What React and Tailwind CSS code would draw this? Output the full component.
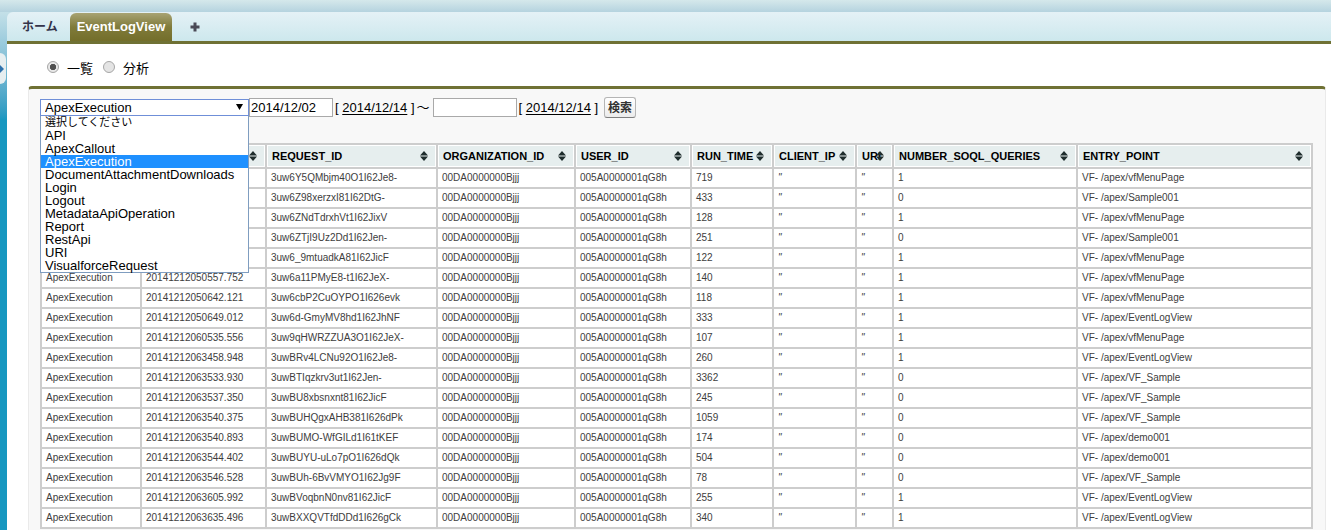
import { useState } from 'react';

const EVENT_TYPES = [
  '選択してください',
  'API',
  'ApexCallout',
  'ApexExecution',
  'DocumentAttachmentDownloads',
  'Login',
  'Logout',
  'MetadataApiOperation',
  'Report',
  'RestApi',
  'URI',
  'VisualforceRequest',
];

const COLUMNS = [
  { name: 'EVENT_TYPE', width: 'w-[98px]' },
  { name: 'TIMESTAMP', width: 'w-[123px]' },
  { name: 'REQUEST_ID', width: 'w-[169px]' },
  { name: 'ORGANIZATION_ID', width: 'w-[136px]' },
  { name: 'USER_ID', width: 'w-[114px]' },
  { name: 'RUN_TIME', width: 'w-[80px]' },
  { name: 'CLIENT_IP', width: 'w-[81px]' },
  { name: 'URI', width: 'w-[35px]' },
  { name: 'NUMBER_SOQL_QUERIES', width: 'w-[182px]' },
  { name: 'ENTRY_POINT', width: '' },
];

// timestamp, request id, run time, soql queries, entry point
const LOGS = [
  ['', '3uw6Y5QMbjm40O1I62Je8-', '719', '1', 'vfMenuPage'],
  ['', '3uw6Z98xerzxI81I62DtG-', '433', '0', 'Sample001'],
  ['', '3uw6ZNdTdrxhVt1I62JixV', '128', '1', 'vfMenuPage'],
  ['', '3uw6ZTjI9Uz2Dd1I62Jen-', '251', '0', 'Sample001'],
  ['', '3uw6_9mtuadkA81I62JicF', '122', '1', 'vfMenuPage'],
  ['20141212050557.752', '3uw6a11PMyE8-t1I62JeX-', '140', '1', 'vfMenuPage'],
  ['20141212050642.121', '3uw6cbP2CuOYPO1I626evk', '118', '1', 'vfMenuPage'],
  ['20141212050649.012', '3uw6d-GmyMV8hd1I62JhNF', '333', '1', 'EventLogView'],
  ['20141212060535.556', '3uw9qHWRZZUA3O1I62JeX-', '107', '1', 'vfMenuPage'],
  ['20141212063458.948', '3uwBRv4LCNu92O1I62Je8-', '260', '1', 'EventLogView'],
  ['20141212063533.930', '3uwBTIqzkrv3ut1I62Jen-', '3362', '0', 'VF_Sample'],
  ['20141212063537.350', '3uwBU8xbsnxnt81I62JicF', '245', '0', 'VF_Sample'],
  ['20141212063540.375', '3uwBUHQgxAHB381I626dPk', '1059', '0', 'VF_Sample'],
  ['20141212063540.893', '3uwBUMO-WfGILd1I61tKEF', '174', '0', 'demo001'],
  ['20141212063544.402', '3uwBUYU-uLo7pO1I626dQk', '504', '0', 'demo001'],
  ['20141212063546.528', '3uwBUh-6BvVMYO1I62Jg9F', '78', '0', 'VF_Sample'],
  ['20141212063605.992', '3uwBVoqbnN0nv81I62JicF', '255', '1', 'EventLogView'],
  ['20141212063635.496', '3uwBXXQVTfdDDd1I626gCk', '340', '1', 'EventLogView'],
];

const SortIcon = () => (
  <svg className="absolute right-[7px] top-1/2 -translate-y-1/2" width="8" height="10" viewBox="0 0 8 10" aria-hidden="true">
    <path d="M4 0 8 4.500H0zM4 10 0 5.500h8z" fill="#1f2d2d" />
  </svg>
);

const TabBar = () => (
  <nav className="flex h-8 items-stretch rounded-tl-md border-b-3 border-[#6f7134] bg-linear-to-b from-[#e4f1f6] to-[#cde8ed] pl-[15px]">
    <a href="#home" className="flex items-center pr-3 text-[12px] font-bold text-[#33334a]">
      ホーム
    </a>
    <a
      href="#log"
      className="mt-px flex items-center rounded-t-md bg-linear-to-b from-[#a8a373] via-[#807b3a] via-50% to-[#736e2a] px-[7px] text-[13px] font-bold text-white"
    >
      EventLogView
    </a>
    <button type="button" aria-label="すべてのタブ" className="ml-[18px] flex items-center">
      <svg width="10" height="10" viewBox="0 0 10 10" aria-hidden="true">
        <path d="M3.5 0.5h3v3h3v3h-3v3h-3v-3h-3v-3h3z" fill="#4a4a56" />
      </svg>
    </button>
  </nav>
);

const ModeRadio = ({ value, mode, onChange }) => (
  <label className="flex items-center gap-2">
    <input
      type="radio"
      name="mode"
      checked={mode === value}
      onChange={() => onChange(value)}
      className="mb-1 size-3 appearance-none rounded-full border border-[#a6a6a6] bg-[#e4e4e4] checked:bg-radial checked:from-[#505050] checked:from-40% checked:to-[#e8e8e8] checked:to-50%"
    />
    {value}
  </label>
);

const DateField = ({ label, value, onChange }) => (
  <>
    <input
      type="text"
      aria-label={label}
      value={value}
      onChange={(e) => onChange(e.target.value)}
      className="h-[19px] w-21 border border-[#a9a9a9] bg-white px-px"
    />
    <span className="whitespace-pre pl-0.5">
      {'[ '}
      <a href="#today" className="underline underline-offset-2" onClick={() => onChange('2014/12/14')}>
        2014/12/14
      </a>
      {' ]'}
    </span>
  </>
);

const SearchBar = () => {
  const [eventType, setEventType] = useState('ApexExecution');
  const [from, setFrom] = useState('2014/12/02');
  const [to, setTo] = useState('');

  return (
    <form className="flex h-[21px] items-center text-[13px] text-black" onSubmit={(e) => e.preventDefault()}>
      <div className="relative w-[209px]">
        <select
          aria-label="イベント種別"
          value={eventType}
          onChange={(e) => setEventType(e.target.value)}
          className="block h-[17px] w-full appearance-none border border-[#6f8fd8] bg-white px-1 leading-[15px]"
        >
          {EVENT_TYPES.map((type) => (
            <option key={type}>{type}</option>
          ))}
        </select>
        <svg className="absolute right-1.5 top-[5px]" width="7" height="6" viewBox="0 0 7 6" aria-hidden="true">
          <path d="M0 0h7L3.500 6z" fill="#000" />
        </svg>
        <ul role="listbox" className="absolute left-0 top-full z-10 w-full border border-t-0 border-[#7f9dc0] bg-white">
          {EVENT_TYPES.map((type) => (
            <li
              key={type}
              role="option"
              aria-selected={type === eventType}
              onClick={() => setEventType(type)}
              className="h-[13px] px-1 leading-[13px] whitespace-nowrap first:text-[11px] aria-selected:bg-[#1e90ff] aria-selected:text-white"
            >
              {type}
            </li>
          ))}
        </ul>
      </div>
      <DateField label="開始日" value={from} onChange={setFrom} />
      <span className="mr-[3px] ml-0.5">～</span>
      <DateField label="終了日" value={to} onChange={setTo} />
      <button
        type="submit"
        className="ml-1.5 h-[21px] rounded-[3px] border border-[#b5b5b5] border-b-[#7f7f7f] bg-linear-to-b from-white to-[#ececec] px-[3px] text-[12px] leading-4 font-bold text-[#333]"
      >
        検索
      </button>
    </form>
  );
};

const LogTable = () => (
  <table className="mt-[25px] w-full table-fixed border-separate border-spacing-[2px] bg-[#cdcdcd] text-left">
    <colgroup>
      {COLUMNS.map((col) => (
        <col key={col.name} className={col.width} />
      ))}
    </colgroup>
    <thead>
      <tr className="h-[22px] text-[11px] leading-4 text-black">
        {COLUMNS.map((col) => (
          <th key={col.name} className="relative border border-white bg-[#e6eeee] px-1 py-0 font-bold">
            {col.name}
            <SortIcon />
          </th>
        ))}
      </tr>
    </thead>
    <tbody>
      {LOGS.map(([timestamp, requestId, runTime, queries, page]) => (
        <tr key={requestId} className="h-[18px] text-[10px] leading-4 whitespace-nowrap text-[#3d3d3d] *:bg-white *:px-1 *:py-0">
          <td>{timestamp && 'ApexExecution'}</td>
          <td>{timestamp}</td>
          <td>{requestId}</td>
          <td>00DA0000000Bjjj</td>
          <td>005A0000001qG8h</td>
          <td>{runTime}</td>
          <td className="italic">"</td>
          <td className="italic">"</td>
          <td>{queries}</td>
          <td>VF- /apex/{page}</td>
        </tr>
      ))}
    </tbody>
  </table>
);

const App = () => {
  const [mode, setMode] = useState('一覧');

  return (
    <div className="relative min-h-screen bg-[#1797c0] bg-linear-to-b from-[#d3e8ec] to-[#1797c0] to-[120px] pl-[7px] font-['Liberation_Sans','Noto_Sans_CJK_JP',sans-serif]">
      <div className="-ml-[7px] h-3 bg-linear-to-b from-[#d5e8eb] to-[#b5d3df]" />
      <button
        type="button"
        aria-label="サイドバーを開く"
        className="absolute left-0 top-[53px] flex h-[31px] w-1.5 items-center rounded-r-md bg-[#e6eef0]"
      >
        <svg width="4" height="8" viewBox="0 0 4 8" aria-hidden="true">
          <path d="M0 0 4 4 0 8z" fill="#2f72ad" />
        </svg>
      </button>
      <TabBar />
      <main className="bg-white pr-[5px] pl-[21px]">
        <div className="flex h-[42px] items-center gap-2.5 pt-2 pl-[19px] text-[13px] text-black">
          <ModeRadio value="一覧" mode={mode} onChange={setMode} />
          <ModeRadio value="分析" mode={mode} onChange={setMode} />
        </div>
        <section className="rounded-t border-x border-t-3 border-x-[#eaeaea] border-t-[#6f7134] bg-[#f8f8f8] px-3 pt-2 pb-1 pl-[11px]">
          <SearchBar />
          <LogTable />
        </section>
      </main>
    </div>
  );
};

export default App;
